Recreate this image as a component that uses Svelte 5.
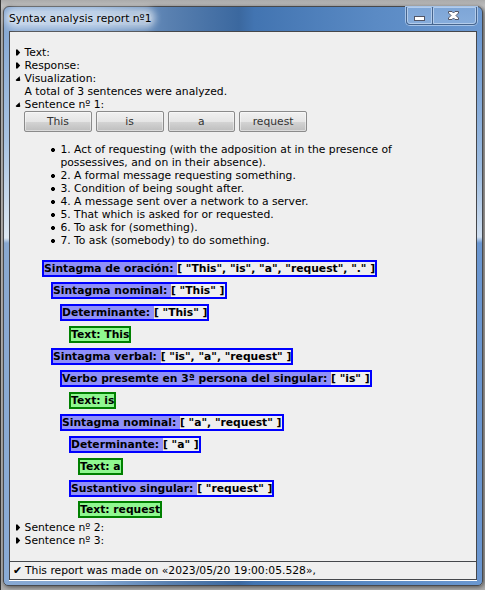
<script>
  const words = ['This', 'is', 'a', 'request'];
  const meanings = [
    '1. Act of requesting (with the adposition at in the presence of possessives, and on in their absence).',
    '2. A formal message requesting something.',
    '3. Condition of being sought after.',
    '4. A message sent over a network to a server.',
    '5. That which is asked for or requested.',
    '6. To ask for (something).',
    '7. To ask (somebody) to do something.'
  ];
  const nodes = [
    { depth: 0, label: 'Sintagma de oración:', value: '[ "This", "is", "a", "request", "." ]' },
    { depth: 1, label: 'Sintagma nominal:', value: '[ "This" ]' },
    { depth: 2, label: 'Determinante:', value: '[ "This" ]' },
    { depth: 3, text: 'This' },
    { depth: 1, label: 'Sintagma verbal:', value: '[ "is", "a", "request" ]' },
    { depth: 2, label: 'Verbo presemte en 3ª persona del singular:', value: '[ "is" ]' },
    { depth: 3, text: 'is' },
    { depth: 2, label: 'Sintagma nominal:', value: '[ "a", "request" ]' },
    { depth: 3, label: 'Determinante:', value: '[ "a" ]' },
    { depth: 4, text: 'a' },
    { depth: 3, label: 'Sustantivo singular:', value: '[ "request" ]' },
    { depth: 4, text: 'request' }
  ];
</script>

{#snippet summary(label, open)}
  <div class="summary">
    <svg class="marker" width="6" height="8" viewBox="0 0 6 8">
      {#if open}
        <path d="M4.6 2.2L5.3 6.2L4.6 7H1.5L.6 6Z" />
      {:else}
        <path d="M1 1.5H2.5L5.2 4.5L2.5 7.5H1Z" />
      {/if}
    </svg>
    <span>{label}</span>
  </div>
{/snippet}

<div class="desktop">
  <div class="window">
    <header class="titlebar">
      <span class="title">Syntax analysis report nº1</span>
      <div class="controls">
        <button class="min" aria-label="Minimize">
          <svg width="11" height="5" viewBox="0 0 11 5"><rect x="0.5" y="0.5" width="10" height="4" fill="#fff" stroke="#535666" /></svg>
        </button>
        <button class="close" aria-label="Close">
          <svg width="11" height="9" viewBox="0 0 11 9"><path d="M.5 .5H4L5.5 2L7 .5H10.5V2L8 4.5L10.5 7V8.5H7L5.5 7L4 8.5H.5V7L3 4.5L.5 2Z" fill="#fff" stroke="#535666" /></svg>
        </button>
      </div>
    </header>

    <div class="client">
      <main class="body">
        {@render summary('Text:', false)}
        {@render summary('Response:', false)}
        {@render summary('Visualization:', true)}
        <div class="note">A total of 3 sentences were analyzed.</div>
        {@render summary('Sentence nº 1:', true)}
        <div class="words">
          {#each words as word}
            <button class="word">{word}</button>
          {/each}
        </div>
        <ul class="meanings">
          {#each meanings as meaning}
            <li>{meaning}</li>
          {/each}
        </ul>
        <div class="tree">
          {#each nodes as node}
            <div class="row" style="padding-left: {node.depth * 9}px">
              {#if node.text}
                <span class="node leaf">Text: {node.text}</span>
              {:else}
                <span class="node"><span class="label">{node.label}&nbsp;</span>{node.value}</span>
              {/if}
            </div>
          {/each}
        </div>
        {@render summary('Sentence nº 2:', false)}
        {@render summary('Sentence nº 3:', false)}
      </main>
      <footer class="status"><span class="check">✔</span><span>This report was made on «2023/05/20 19:00:05.528»,</span></footer>
    </div>
  </div>
</div>

<style>
  .desktop {
    box-sizing: border-box;
    width: 485px;
    height: 590px;
    padding: 6px 2px 4px 3px;
    overflow: hidden;
    background: linear-gradient(90deg, #333 0 1px, transparent 1px), linear-gradient(#aaa, #c4c4c4 6px, #bbb 30px, #c0bcb9 300px, #b0b0b0);
    font: 10.75px/13px 'DejaVu Sans', sans-serif;
    color: #000;
  }
  .window {
    box-sizing: border-box;
    width: 480px;
    height: 580px;
    padding: 0 5px;
    border: 1px solid #47494d;
    border-radius: 6px 6px 5px 5px;
    box-shadow: 1px 1px 5px #222b;
    background:
      linear-gradient(#6b98d1 0, #9dbce0 140px, #d0dff0 206px, #6a96d0 212px, #6a96d0) right 24px / 6px 550px no-repeat,
      linear-gradient(#87a9d4 0, #a8c3e2 110px, #dce7f2 207px, #89a8d0 212px, #89abd6) left 24px / 6px 550px no-repeat,
      linear-gradient(90deg, #88a9d3 0, #83a7d3 90px, #5980b0 165px, #3b689f 235px, #4274b1 250px, #5a8ac4 370px, #6b98d1);
  }
  .titlebar {
    display: flex;
    justify-content: space-between;
    height: 24px;
  }
  .title {
    height: 14px;
    margin: 4px 0 0;
    line-height: 15px;
    border-radius: 7px;
    background: #ffffff78;
    box-shadow: 0 0 6px 4px #ffffff78;
    text-shadow: 0 0 5px #fff;
  }
  .controls {
    display: flex;
    box-sizing: border-box;
    width: 71px;
    height: 18px;
    border: 1px solid #47658d;
    border-top: 0;
    border-radius: 0 0 4px 4px;
    box-shadow: 0 0 0 1px #a6c3e7;
  }
  .controls button {
    display: flex;
    justify-content: center;
    box-sizing: border-box;
    height: 17px;
    padding: 8px 0 0;
    border: 1px solid #b3cceb;
    background: linear-gradient(#7ea6d7, #86acdb);
  }
  .controls .min {
    width: 25px;
    border-bottom-left-radius: 3px;
  }
  .controls .close {
    flex: 1;
    margin-left: 1px;
    padding: 3px 2px 0 0;
    border-bottom-right-radius: 3px;
    box-shadow: -1px 0 #47658d;
  }
  .client {
    display: flex;
    flex-direction: column;
    box-sizing: border-box;
    height: 549px;
    border: 1px solid #45474b;
    background: #efefef;
    box-shadow: 0 1px #fff;
  }
  .body {
    flex: 1;
    padding: 14px 5px 0;
  }
  .summary {
    display: flex;
    height: 13px;
  }
  .marker {
    flex: none;
    width: 6px;
    height: 8px;
    margin: 2px 3.6px 0 0;
  }
  .note {
    padding-left: 9.6px;
  }
  .words {
    display: flex;
    gap: 4px;
    height: 21px;
    padding-left: 9px;
  }
  .word {
    box-sizing: border-box;
    width: 67.75px;
    height: 21px;
    padding: 0;
    border: 1px solid #8b8b8b;
    border-radius: 2px;
    background: linear-gradient(#f1f1f1, #e5e5e5 50%, #d4d4d4 52%, #bebebe);
    box-shadow: inset 0 0 0 1px #ffffff70;
    font: inherit;
    color: #333;
  }
  .meanings {
    width: 358px;
    margin: 11px 0 13px 36px;
    padding: 0;
    list-style: none;
  }
  .meanings li {
    padding-left: 9.4px;
    background: radial-gradient(circle at 2px 7px, #000 1.6px, transparent 2.3px);
  }
  .tree {
    padding-left: 27px;
    margin-bottom: 3px;
    font-weight: bold;
  }
  .row {
    display: flex;
    height: 22px;
  }
  .row:last-child {
    height: 17px;
    margin-top: -1px;
  }
  .node {
    box-sizing: border-box;
    height: 17px;
    border: 2px solid #00f;
    white-space: pre;
  }
  .label {
    display: inline-block;
    height: 13px;
    background: #9090f8;
  }
  .leaf {
    border-color: #008000;
    background: #90f890;
  }
  .status {
    display: flex;
    box-sizing: border-box;
    height: 18px;
    padding: 2px 0 0 3px;
    border-top: 1px solid #45474b;
  }
  .check {
    width: 12px;
  }
</style>
